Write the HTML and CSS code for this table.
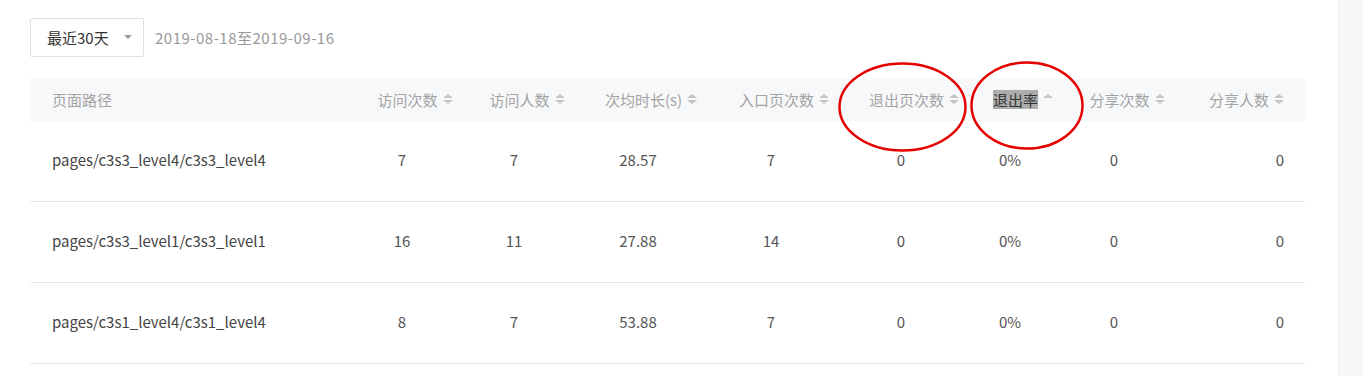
FILE: index.html
```html
<!DOCTYPE html>
<html lang="zh-CN">
<head>
<meta charset="utf-8">
<title>页面访问</title>
<link rel="stylesheet" href="styles.css">
</head>
<body>
<div class="page">
  <main class="content">
    <div class="toolbar">
      <div class="select">
        <span class="select-label">最近30天</span>
        <span class="caret"></span>
      </div>
      <span class="range">2019-08-18至2019-09-16</span>
    </div>

    <div class="table">
      <div class="row head">
        <div class="cell path">页面路径</div>
        <div class="cell num"><span>访问次数</span><i class="sort"><b class="up"></b><b class="down"></b></i></div>
        <div class="cell num"><span>访问人数</span><i class="sort"><b class="up"></b><b class="down"></b></i></div>
        <div class="cell num"><span>次均时长(s)</span><i class="sort"><b class="up"></b><b class="down"></b></i></div>
        <div class="cell num"><span>入口页次数</span><i class="sort"><b class="up"></b><b class="down"></b></i></div>
        <div class="cell num"><span>退出页次数</span><i class="sort"><b class="up"></b><b class="down"></b></i></div>
        <div class="cell num"><span class="selected">退出率</span><i class="sort"><b class="up"></b><b class="down hidden"></b></i></div>
        <div class="cell num"><span>分享次数</span><i class="sort"><b class="up"></b><b class="down"></b></i></div>
        <div class="cell last"><span>分享人数</span><i class="sort"><b class="up"></b><b class="down"></b></i></div>
      </div>

      <div class="row body">
        <div class="cell path">pages/c3s3_level4/c3s3_level4</div>
        <div class="cell val">7</div>
        <div class="cell val">7</div>
        <div class="cell val">28.57</div>
        <div class="cell val">7</div>
        <div class="cell val">0</div>
        <div class="cell val">0%</div>
        <div class="cell val">0</div>
        <div class="cell last">0</div>
      </div>
      <div class="row body">
        <div class="cell path">pages/c3s3_level1/c3s3_level1</div>
        <div class="cell val">16</div>
        <div class="cell val">11</div>
        <div class="cell val">27.88</div>
        <div class="cell val">14</div>
        <div class="cell val">0</div>
        <div class="cell val">0%</div>
        <div class="cell val">0</div>
        <div class="cell last">0</div>
      </div>
      <div class="row body">
        <div class="cell path">pages/c3s1_level4/c3s1_level4</div>
        <div class="cell val">8</div>
        <div class="cell val">7</div>
        <div class="cell val">53.88</div>
        <div class="cell val">7</div>
        <div class="cell val">0</div>
        <div class="cell val">0%</div>
        <div class="cell val">0</div>
        <div class="cell last">0</div>
      </div>
    </div>
  </main>
  <aside class="side"></aside>

  <svg class="marks" width="1363" height="376" viewBox="0 0 1363 376">
    <ellipse cx="902.5" cy="107" rx="63" ry="43.5" fill="none" stroke="#e60000" stroke-width="2.5"/>
    <ellipse cx="1027" cy="105.5" rx="55.5" ry="43" fill="none" stroke="#e60000" stroke-width="2.5"/>
  </svg>
</div>
</body>
</html>
```

FILE: styles.css
```css
* { box-sizing: border-box; }
html, body { margin: 0; padding: 0; background: #fff; }
body {
  font-family: "Noto Sans CJK SC", "Noto Sans", sans-serif;
  font-size: 15px;
  color: #555;
}
.page {
  position: relative;
  display: flex;
  width: 1363px;
  height: 376px;
  overflow: hidden;
}
.content {
  width: 1338px;
  padding: 18px 33px 0 30px;
}
.side {
  flex: 1;
  background: #f6f7f9;
  border-left: 1px solid #eceef1;
}
.toolbar {
  display: flex;
  align-items: center;
  height: 39px;
}
.select {
  display: flex;
  align-items: center;
  width: 114px;
  height: 39px;
  border: 1px solid #dcdfe6;
  border-radius: 2px;
  padding-left: 16px;
  padding-bottom: 1px;
}
.select-label { color: #333; font-size: 15px; }
.caret {
  margin-left: 15px;
  width: 0; height: 0;
  border-left: 4px solid transparent;
  border-right: 4px solid transparent;
  border-top: 4px solid #999;
}
.range {
  margin-left: 11px;
  color: #999;
  font-size: 15px;
  letter-spacing: 0.5px;
}
.table { margin-top: 22px; width: 1275px; }
.row {
  display: grid;
  grid-template-columns: 329px 112px 112px 136px 130px 130px 88px 120px 1fr;
  align-items: center;
}
.head {
  height: 42px;
  padding-bottom: 2px;
  background: #f7f8fa;
  color: #a3a3a3;
}
.body {
  height: 81px;
  padding-bottom: 4px;
  border-bottom: 1px solid #e8e8e8;
  color: #555;
}
.cell.path { padding-left: 22px; }
.head .cell.path { color: #a3a3a3; }
.body .cell.path { color: #444; }
.cell.num {
  display: flex;
  justify-content: center;
  align-items: center;
}
.cell.val {
  text-align: center;
  padding-right: 26px;
}
.cell.last {
  display: flex;
  justify-content: flex-end;
  align-items: center;
  padding-right: 21px;
}
.selected {
  background: #acacac;
  color: #333;
  line-height: 19px;
}
.sort {
  display: flex;
  flex-direction: column;
  gap: 2px;
  margin-left: 5px;
}
.sort b {
  display: block;
  width: 0; height: 0;
  border-left: 5px solid transparent;
  border-right: 5px solid transparent;
}
.sort .up { border-bottom: 4px solid #c4c4c4; }
.sort .down { border-top: 4px solid #c4c4c4; }
.sort .down.hidden { border-top-color: transparent; }
.marks {
  position: absolute;
  left: 0; top: 0;
  pointer-events: none;
}
```
